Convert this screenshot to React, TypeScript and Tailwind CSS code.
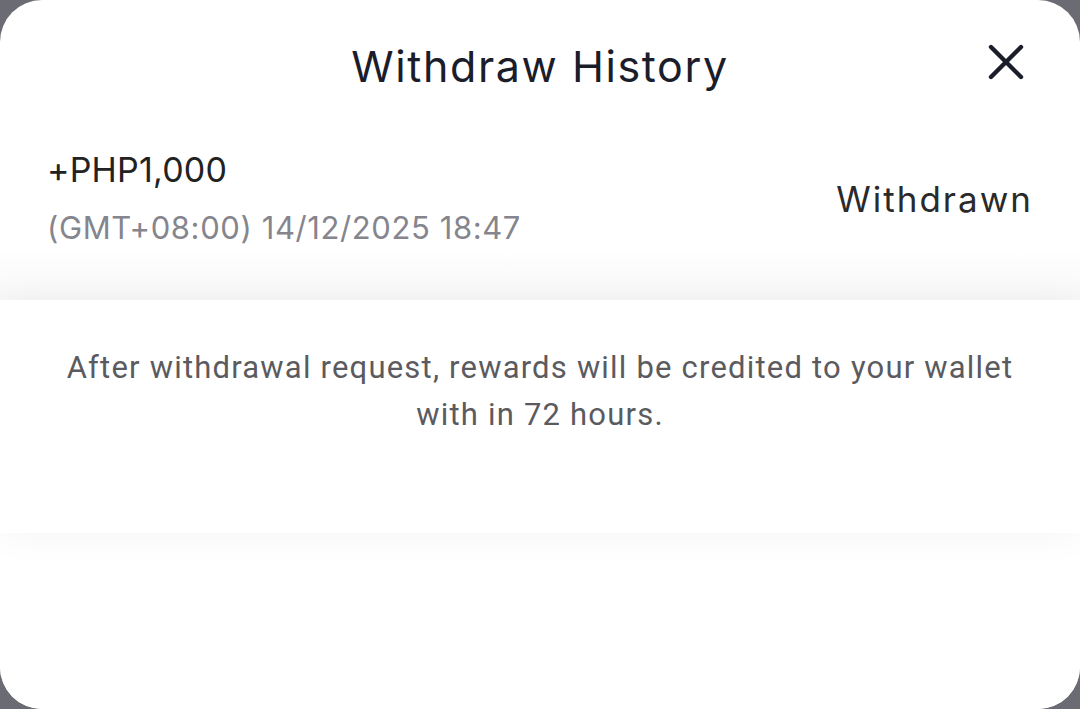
import React from "react";

const CloseIcon = () => (
  <svg width="36" height="36" viewBox="0 0 36 36" fill="none">
    <path
      d="M3 3L33 33M33 3L3 33"
      stroke="#1b1d2b"
      strokeWidth="4.4"
      strokeLinecap="round"
    />
  </svg>
);

const App = () => {
  return (
    <div className="h-[709px] w-full bg-[#6b6b73]">
      <div className="flex h-full flex-col overflow-hidden rounded-[42px] bg-white">
        {/* Header */}
        <div className="grid h-[132px] grid-cols-[1fr_auto_1fr] items-center px-[56px]">
          <div />
          <h1 className="font-['Inter',sans-serif] text-[43px] font-normal tracking-[1.6px] text-[#1b1d2b]">
            Withdraw History
          </h1>
          <div className="flex justify-end pb-[8px]">
            <button className="flex items-center justify-center">
              <CloseIcon />
            </button>
          </div>
        </div>

        {/* History item */}
        <div className="flex h-[168px] items-center justify-between bg-gradient-to-b from-white from-70% to-[#f8f8f8] px-[47px] pb-[36px] font-['Inter',sans-serif]">
          <div className="flex flex-col">
            <span className="text-[34px] leading-[48px] tracking-[0.2px] text-[#222222]">
              +PHP1,000
            </span>
            <span className="mt-[12px] text-[31px] leading-[44px] tracking-[0.6px] text-[#85858d]">
              (GMT+08:00) 14/12/2025 18:47
            </span>
          </div>
          <span className="pt-[2px] text-[35px] tracking-[2px] text-[#2a2a2a]">Withdrawn</span>
        </div>

        {/* Notice */}
        <div className="relative h-[233px] bg-white px-[60px] pt-[44px] text-center shadow-[0_0_36px_rgba(0,0,0,0.05)]">
          <p className="font-['Roboto',sans-serif] text-[31px] leading-[47px] tracking-[1.2px] text-[#5b5b5f]">
            After withdrawal request, rewards will be credited to your wallet
            with in 72 hours.
          </p>
        </div>

        <div className="flex-1 bg-white" />
      </div>
    </div>
  );
};

export default App;
